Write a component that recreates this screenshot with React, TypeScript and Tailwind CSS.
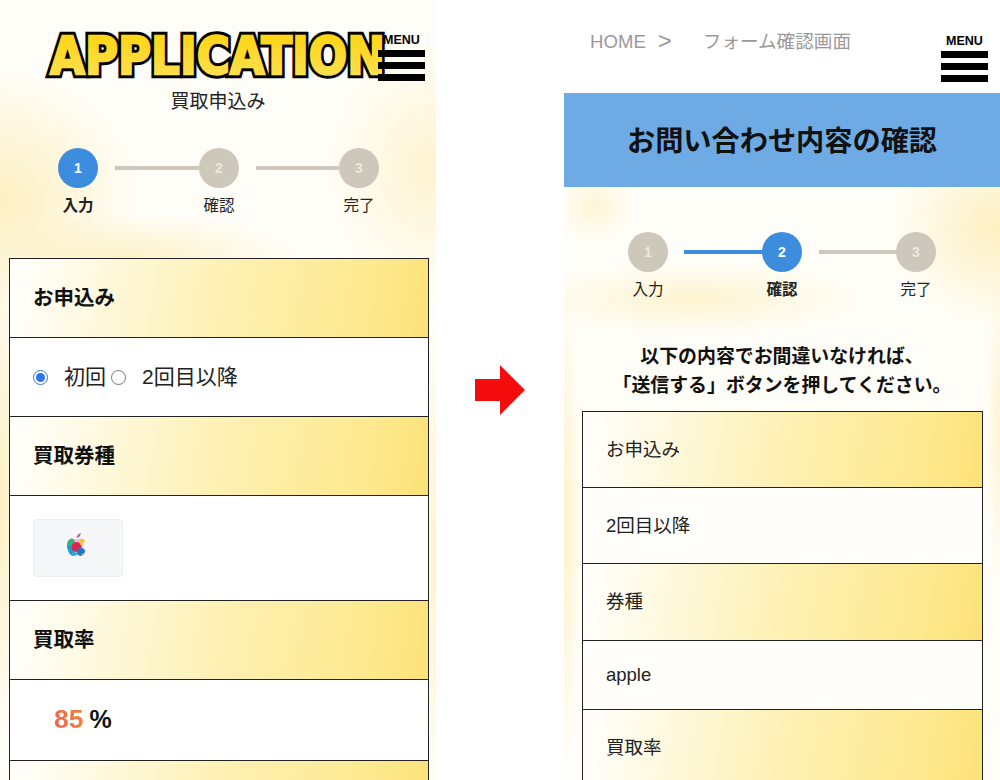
import React from 'react';

const font = { fontFamily: '"Liberation Sans", "Noto Sans CJK JP", sans-serif' };

const headRow =
  'bg-[linear-gradient(100deg,#fffefa_3%,#fdf1b4_50%,#fde98e_85%,#fce177_100%)]';

function Menu() {
  return (
    <div className="flex flex-col items-center">
      <span className="text-[12.5px] font-bold leading-[14px] text-black">MENU</span>
      <div className="mt-[3px] flex w-[47px] flex-col gap-[5px]">
        <div className="h-[7px] bg-black" />
        <div className="h-[7px] bg-black" />
        <div className="h-[7px] bg-black" />
      </div>
    </div>
  );
}

function Steps({ active, gaps }: { active: number; gaps: string[] }) {
  const labels = ['入力', '確認', '完了'];
  return (
    <div className="flex items-start">
      {labels.map((label, i) => (
        <React.Fragment key={label}>
          {i > 0 && (
            <div
              className={`mt-[18px] h-[4px] ${gaps[i - 1]} ${i === active - 1 ? 'bg-[#3c8dde]' : 'bg-[#cdc7bc]'}`}
            />
          )}
          <div className="flex w-10 flex-col items-center">
            <div
              className={`flex h-10 w-10 items-center justify-center rounded-full text-[14px] font-bold ${
                i === active - 1 ? 'bg-[#3c8dde] text-white' : 'bg-[#cdc7bc] text-[#ece8e0]'
              }`}
            >
              {i + 1}
            </div>
            <span
              className={`mt-[8px] whitespace-nowrap text-[15.5px] leading-5 text-[#222] ${
                i === active - 1 ? 'font-bold' : ''
              }`}
            >
              {label}
            </span>
          </div>
        </React.Fragment>
      ))}
    </div>
  );
}

function Logo() {
  return (
    <svg width="350" height="60" viewBox="0 0 350 60" className="overflow-visible">
      <defs>
        <linearGradient id="logoFill" x1="0" y1="0" x2="0" y2="1">
          <stop offset="0" stopColor="#ffd30a" />
          <stop offset="1" stopColor="#fde25c" />
        </linearGradient>
      </defs>
      <g fontFamily="DejaVu Sans, sans-serif" fontWeight="700" fontSize="51">
        <text x="7" y="49" textLength="335" lengthAdjust="spacingAndGlyphs" stroke="#000" strokeWidth="8.5" strokeLinejoin="miter" fill="#000">
          APPLICATION
        </text>
        <text x="7" y="49" textLength="335" lengthAdjust="spacingAndGlyphs" stroke="url(#logoFill)" strokeWidth="2.4" fill="url(#logoFill)">
          APPLICATION
        </text>
      </g>
    </svg>
  );
}

function AppleIcon() {
  return (
    <svg width="22" height="26" viewBox="0 0 22 26">
      <defs>
        <clipPath id="appleClip">
          <path d="M15 6.500c-2 0-3 1.100-4.300 1.100S8.400 6.500 6.500 6.500C3.500 6.500 1 9.200 1 13.200 1 18 4.300 24 7.100 24c1.400 0 2.200-.9 3.800-.9s2.300.9 3.800.9c2 0 4.300-3.500 5.100-6-2.200-.9-3.300-2.600-3.300-4.700 0-1.900 1-3.300 2.700-4.400-1-1.500-2.500-2.400-4.200-2.400z" />
        </clipPath>
      </defs>
      <path d="M10.800 6c0-2.400 1.500-4.400 3.900-5 .2 2.600-1.500 4.700-3.900 5z" fill="#b0687c" />
      <g clipPath="url(#appleClip)">
        <rect x="0" y="5" width="22" height="20" fill="#e9b8de" />
        <circle cx="4" cy="11" r="5" fill="#35b37e" />
        <circle cx="4" cy="18" r="5" fill="#1e9bd7" />
        <circle cx="10.500" cy="15" r="5" fill="#d8274f" />
        <circle cx="17" cy="10" r="3.500" fill="#f3c23c" />
        <circle cx="15" cy="20" r="4" fill="#1c79c8" />
        <circle cx="8" cy="23" r="3" fill="#2aa9c9" />
        <circle cx="18" cy="24" r="3" fill="#ee8f2f" />
      </g>
    </svg>
  );
}

function LeftPanel() {
  return (
    <div className="relative h-[780px] w-[436px] shrink-0 overflow-hidden bg-[radial-gradient(ellipse_140px_130px_at_0%_200px,#fdf0c0,transparent),radial-gradient(ellipse_170px_40px_at_130px_255px,#fef3cb,transparent),radial-gradient(ellipse_110px_130px_at_100%_170px,#fef4d0,transparent),radial-gradient(ellipse_24px_240px_at_0%_500px,#fdf0c0,transparent),radial-gradient(ellipse_14px_240px_at_100%_560px,#fef3cb,transparent),linear-gradient(#fffdf7,#fffdf7)]">
      <div className="flex flex-col items-center pt-[25px]">
        <Logo />
        <h1 className="mt-[5px] text-[19px] leading-6 text-[#222]">買取申込み</h1>
      </div>
      <div className="absolute left-[378px] top-[33px]">
        <Menu />
      </div>
      <div className="ml-[58px] mt-[34px]">
        <Steps active={1} gaps={['ml-[17px] w-[84px]', 'ml-[17px] w-[83px]']} />
      </div>
      <div className="ml-[9px] mr-[7px] mt-[42px] border-x border-t border-[#222]">
        <div className={`flex h-[79px] items-center border-b border-[#222] pl-[23px] text-[20.5px] font-bold text-[#111] ${headRow}`}>
          お申込み
        </div>
        <div className="flex h-[79px] items-center border-b border-[#222] bg-white pl-[23px] text-[21px] text-[#222]">
          <input type="radio" name="apply" defaultChecked className="h-[15px] w-[15px] accent-[#2f73ee]" />
          <span className="ml-[16px]">初回</span>
          <input type="radio" name="apply" className="ml-[5px] h-[15px] w-[15px]" />
          <span className="ml-[16px]">2回目以降</span>
        </div>
        <div className={`flex h-[79px] items-center border-b border-[#222] pl-[23px] text-[20.5px] font-bold text-[#111] ${headRow}`}>
          買取券種
        </div>
        <div className="flex h-[105px] items-center border-b border-[#222] bg-white pl-[23px]">
          <div className="flex h-[58px] w-[90px] items-start justify-center rounded-[4px] border border-[#eceef0] bg-[#f5f7f8] pr-[2px] pt-[12px]">
            <AppleIcon />
          </div>
        </div>
        <div className={`flex h-[79px] items-center border-b border-[#222] pl-[23px] text-[20.5px] font-bold text-[#111] ${headRow}`}>
          買取率
        </div>
        <div className="flex h-[81px] items-center border-b border-[#222] bg-white pl-[44px] font-bold text-[#111]">
          <span className="bg-[linear-gradient(90deg,#f0664f,#f28238)] bg-clip-text text-[26.5px] text-transparent">85</span>
          <span className="ml-[6px] text-[25px]">%</span>
        </div>
        <div className={`h-[79px] ${headRow}`} />
      </div>
    </div>
  );
}

function RightPanel() {
  return (
    <div className="relative h-[780px] w-[436px] shrink-0 overflow-hidden bg-white">
      <div className="absolute left-[377px] top-[34px]">
        <Menu />
      </div>
      <div className="flex h-[93px] items-start pl-[26px] pt-[29px] text-[18.6px] leading-[26px] text-[#9a9a9a]">
        <span>HOME</span>
        <span className="ml-[12px] text-[24px] leading-[24px]">&gt;</span>
        <span className="ml-[31px]">フォーム確認画面</span>
      </div>
      <div className="flex h-[94px] items-center justify-center bg-[#6eabe4] pt-[3px] text-[28.2px] font-bold text-[#111]">
        お問い合わせ内容の確認
      </div>
      <div className="h-[593px] overflow-hidden bg-[radial-gradient(ellipse_40px_34px_at_30px_20px,#fef5d6,transparent),radial-gradient(ellipse_110px_100px_at_100%_40px,#fdf0c0,transparent),radial-gradient(ellipse_170px_36px_at_130px_112px,#fef4d0,transparent),radial-gradient(ellipse_18px_240px_at_0%_340px,#fef3cb,transparent),radial-gradient(ellipse_14px_160px_at_100%_240px,#fef4d0,transparent),linear-gradient(#fffdf7,#fffdf7)]">
        <div className="ml-[64px] pt-[45px]">
          <Steps active={2} gaps={['ml-4 mr-[-3px] w-[81px]', 'ml-[17px] mr-[-3px] w-[80px]']} />
        </div>
        <p className="mt-[42px] text-center text-[18.9px] font-bold leading-[29px] text-[#111]">
          以下の内容でお間違いなければ、
          <br />
          「送信する」ボタンを押してください。
        </p>
        <div className="ml-[18px] mr-[17px] mt-[11px] border-x border-t border-[#222]">
          <div className={`flex h-[76px] items-center border-b border-[#222] pl-[23px] text-[18.5px] text-[#222] ${headRow}`}>
            お申込み
          </div>
          <div className="flex h-[76px] items-center border-b border-[#222] bg-[#fffefb] pl-[23px] text-[18.5px] text-[#222]">
            2回目以降
          </div>
          <div className={`flex h-[77px] items-center border-b border-[#222] pl-[23px] text-[18.5px] text-[#222] ${headRow}`}>
            券種
          </div>
          <div className="flex h-[69px] items-center border-b border-[#222] bg-[#fffefb] pl-[23px] text-[18.5px] text-[#222]">
            apple
          </div>
          <div className={`flex h-[76px] items-center pl-[23px] text-[18.5px] text-[#222] ${headRow}`}>
            買取率
          </div>
        </div>
      </div>
    </div>
  );
}

export default function App() {
  return (
    <div className="flex h-[780px] w-[1000px] overflow-hidden bg-white" style={font}>
      <LeftPanel />
      <div className="flex h-[780px] flex-1 items-center justify-start pl-[39px]">
        <svg width="50" height="50" viewBox="0 0 50 50">
          <path d="M0 14h25V0l25 25-25 25V36H0z" fill="#f40d0d" />
        </svg>
      </div>
      <RightPanel />
    </div>
  );
}
